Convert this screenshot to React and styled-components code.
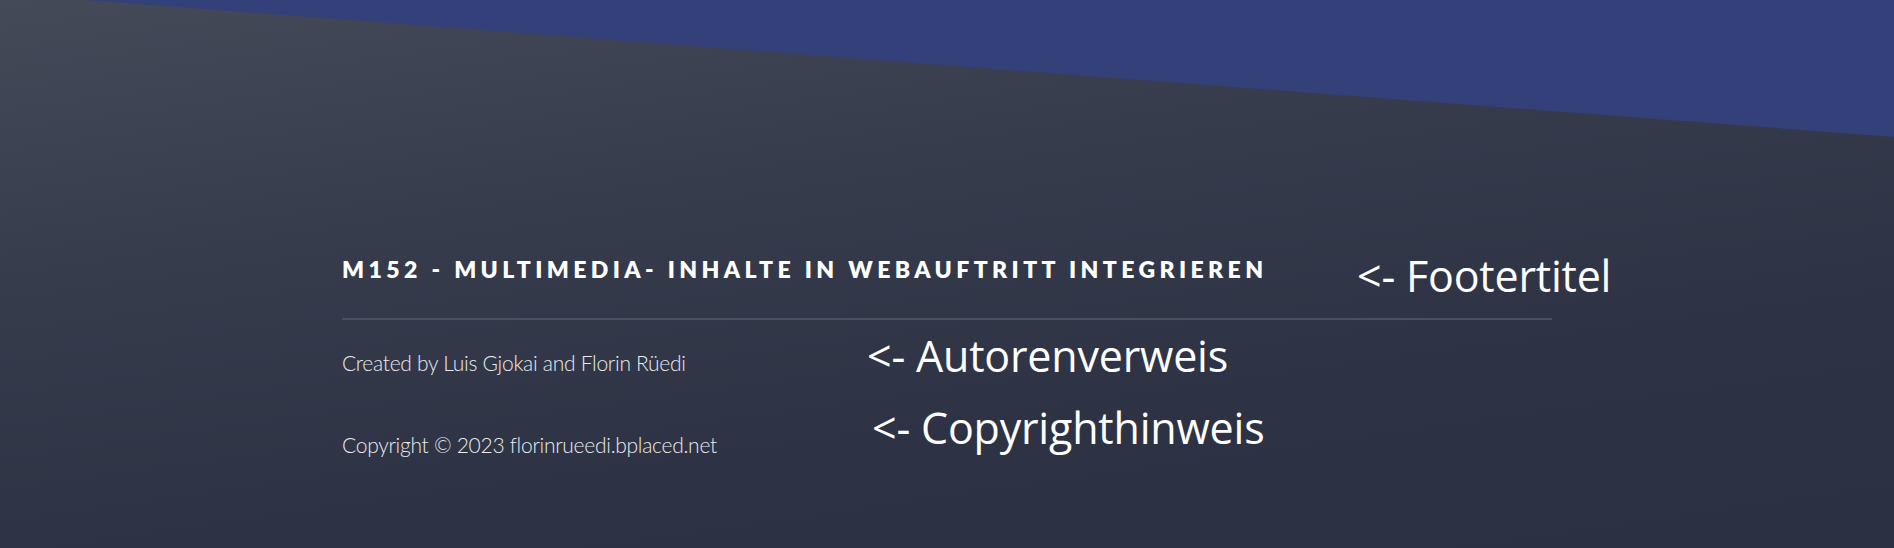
import React from 'react';
import styled, { createGlobalStyle } from 'styled-components';

const GlobalStyle = createGlobalStyle`
  html, body {
    margin: 0;
    padding: 0;
  }
  body {
    background: #2c3243;
  }
`;

const Page = styled.div`
  height: 548px;
  overflow: hidden;
  background: linear-gradient(172deg, #454a59 0%, #363c4c 35%, #2d3344 70%, #2b3142 100%);
`;

const TopBand = styled.div`
  height: 137px;
  background: #334079;
  clip-path: polygon(85px 0, 100% 0, 100% 100%);
`;

const Footer = styled.footer`
  width: 1210px;
  margin: 0 auto;
  padding-top: 119px;
`;

const Row = styled.div`
  display: grid;
  grid-template-columns: ${(p) => p.$col}px auto;
  align-items: start;
  margin-top: ${(p) => p.$top || 0}px;
`;

const Title = styled.h2`
  margin: 0;
  font-family: Lato, "Open Sans", sans-serif;
  font-weight: 800;
  font-size: 23px;
  line-height: 26px;
  letter-spacing: 4.4px;
  text-transform: uppercase;
  color: #ffffff;
  white-space: nowrap;
`;

const Divider = styled.hr`
  margin: 21px 0 0;
  border: 0;
  height: 2px;
  background: #4a5061;
`;

const Text = styled.p`
  margin: ${(p) => p.$top || 0}px 0 0;
  font-family: Lato, "Open Sans", sans-serif;
  font-weight: 300;
  font-size: 21px;
  line-height: 28px;
  letter-spacing: -0.28px;
  color: #e9eaed;
  white-space: nowrap;
`;

const Note = styled.span`
  display: block;
  margin: ${(p) => p.$top || 0}px 0 0 ${(p) => p.$left || 0}px;
  font-family: "Open Sans", Lato, sans-serif;
  font-weight: 400;
  font-size: 43px;
  line-height: 43px;
  letter-spacing: -0.2px;
  color: #ffffff;
  white-space: nowrap;
`;

const App = () => (
  <>
    <GlobalStyle />
    <Page>
      <TopBand />
      <Footer>
        <Row $col={1015}>
          <Title>M152 - Multimedia- Inhalte in Webauftritt integrieren</Title>
          <Note $top={-2}>&lt;- Footertitel</Note>
        </Row>
        <Divider />
        <Row $col={525} $top={16}>
          <Text $top={13}>Created by Luis Gjokai and Florin Rüedi</Text>
          <Note $top={-2}>&lt;- Autorenverweis</Note>
        </Row>
        <Row $col={525} $top={29}>
          <Text $top={25}>Copyright © 2023 florinrueedi.bplaced.net</Text>
          <Note $left={5}>&lt;- Copyrighthinweis</Note>
        </Row>
      </Footer>
    </Page>
  </>
);

export default App;
